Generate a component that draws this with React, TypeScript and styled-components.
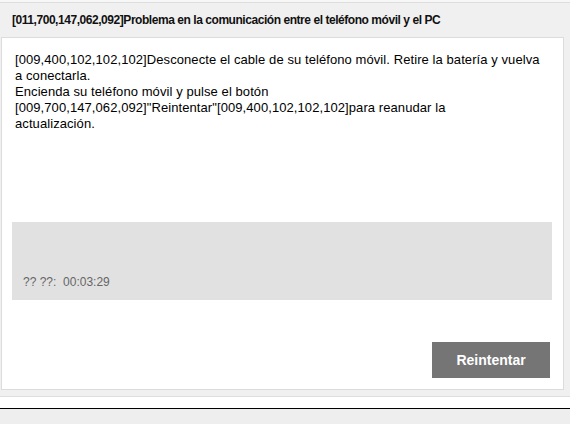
import React from "react";
import styled, { createGlobalStyle } from "styled-components";

const GlobalStyle = createGlobalStyle`
    html, body {
        margin: 0;
        padding: 0;
        background: #eeeeee;
    }
`;

const Page = styled.div`
    width: 570px;
    height: 424px;
    display: flex;
    flex-direction: column;
    background: #f0f0f0;
    font-family: "Liberation Sans", Arial, sans-serif;
    overflow: hidden;
`;

const TopEdge = styled.div`
    height: 2px;
    background: #f7f7f7;
    border-bottom: 1px solid #dedede;
`;

const Header = styled.div`
    height: 34px;
    display: flex;
    align-items: center;
    padding-left: 12px;
    font-size: 12px;
    font-weight: bold;
    color: #111;
    letter-spacing: -0.45px;
`;

const Panel = styled.div`
    height: 351px;
    margin: 0 6px 0 1px;
    border: 1px solid #dcdcdc;
    background: #ffffff;
    display: flex;
    flex-direction: column;
`;

const Message = styled.div`
    height: 170px;
    padding: 14px 10px 0 13px;
    font-size: 13px;
    line-height: 16px;
    letter-spacing: 0.08px;
    white-space: nowrap;
    color: #000;
`;

const ProgressBox = styled.div`
    height: 78px;
    margin: 0 11px 0 10px;
    background: #e1e1e1;
    display: flex;
    align-items: flex-end;
    padding: 0 11px 11px;
    box-sizing: border-box;
    font-size: 12px;
    color: #666;
`;

const Footer = styled.div`
    display: flex;
    justify-content: flex-end;
    padding: 42px 13px 0 0;
`;

const Button = styled.button`
    width: 118px;
    height: 36px;
    border: none;
    background: #757575;
    color: #fff;
    font-family: "Liberation Sans", Arial, sans-serif;
    font-size: 14px;
    font-weight: bold;
    cursor: pointer;
`;

const BottomGap = styled.div`
    height: 6px;
    border-bottom: 1px solid #dedede;
`;

const WhiteStrip = styled.div`
    height: 11px;
    background: #ffffff;
    border-bottom: 1px solid #000;
`;

const Rest = styled.div`
    flex: 1;
    background: #eeeeee;
`;

export default function App() {
    return (
        <Page>
            <GlobalStyle />
            <TopEdge />
            <Header>
                [011,700,147,062,092]Problema en la comunicación entre el teléfono móvil y el PC
            </Header>
            <Panel>
                <Message>
                    [009,400,102,102,102]Desconecte el cable de su teléfono móvil. Retire la batería y vuelva
                    <br />
                    a conectarla.
                    <br />
                    Encienda su teléfono móvil y pulse el botón
                    <br />
                    [009,700,147,062,092]"Reintentar"[009,400,102,102,102]para reanudar la
                    <br />
                    actualización.
                </Message>
                <ProgressBox>?? ??:&nbsp; 00:03:29</ProgressBox>
                <Footer>
                    <Button>Reintentar</Button>
                </Footer>
            </Panel>
            <BottomGap />
            <WhiteStrip />
            <Rest />
        </Page>
    );
}
